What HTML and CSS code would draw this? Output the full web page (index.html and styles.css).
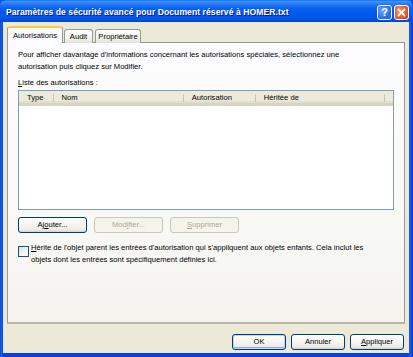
FILE: index.html
```html
<!DOCTYPE html>
<html lang="fr">
<head>
<meta charset="utf-8">
<link rel="stylesheet" href="styles.css">
</head>
<body>
<div class="window">
  <div class="titlebar">
    <span class="title">Paramètres de sécurité avancé pour Document réservé à HOMER.txt</span>
    <div class="caption-buttons">
      <span class="cap-btn help">?</span>
      <span class="cap-btn close"><svg width="9" height="9" viewBox="0 0 9 9"><path d="M1.5 1.5 L7.5 7.5 M7.5 1.5 L1.5 7.5" stroke="#fff" stroke-width="1.8" stroke-linecap="round"/></svg></span>
    </div>
  </div>
  <div class="client">
    <div class="tabs">
      <span class="tab active">Autorisations</span>
      <span class="tab t-audit">Audit</span>
      <span class="tab t-prop">Propriétaire</span>
    </div>
    <div class="panel">
      <p class="intro">Pour afficher davantage d'informations concernant les autorisations spéciales, sélectionnez une autorisation puis cliquez sur Modifier.</p>
      <div class="label"><u>L</u>iste des autorisations :</div>
      <div class="listview">
        <div class="lv-header">
          <span class="col c-type">Type</span>
          <span class="col c-nom">Nom</span>
          <span class="col c-aut">Autorisation</span>
          <span class="col c-her">Héritée de</span>
          <span class="col c-rest"></span>
        </div>
      </div>
      <div class="actions">
        <button class="btn">Aj<u>o</u>uter...</button>
        <button class="btn disabled">Mod<u>i</u>fier...</button>
        <button class="btn disabled"><u>S</u>upprimer</button>
      </div>
      <div class="inherit">
        <span class="checkbox"></span>
        <span class="inherit-text"><u>H</u>érite de l'objet parent les entrées d'autorisation qui s'appliquent aux objets enfants. Cela inclut les objets dont les entrées sont spécifiquement définies ici.</span>
      </div>
    </div>
    <div class="footer">
      <button class="btn default">OK</button>
      <button class="btn">Annuler</button>
      <button class="btn"><u>A</u>ppliquer</button>
    </div>
  </div>
</div>
</body>
</html>
```

FILE: styles.css
```css
* { box-sizing: border-box; }
html, body { margin: 0; padding: 0; }
body {
  width: 413px;
  height: 357px;
  overflow: hidden;
  font-family: "Liberation Sans", Arial, sans-serif;
  font-size: 7.6px;
  color: #000;
}
.window {
  width: 413px;
  height: 357px;
  display: flex;
  flex-direction: column;
  background: linear-gradient(to right, #0831D9 0, #166AEE 1px, #0842D8 3px, #0842D8 408px, #1661E8 410px, #0831D9 413px);
}
.titlebar {
  height: 22px;
  flex: none;
  display: flex;
  align-items: center;
  justify-content: space-between;
  padding: 0 4px 0 6px;
  background: linear-gradient(to bottom, #0A5FE8 0, #3D95FF 1px, #2B83F8 3px, #0B61EE 8px, #0058EE 14px, #0055E5 19px, #0048CC 22px);
  border-radius: 6px 6px 0 0;
}
.title {
  color: #fff;
  font-weight: bold;
  font-size: 8.6px;
  letter-spacing: 0.05px;
  text-shadow: 1px 1px 0 #0A1883;
  margin-top: 1px;
}
.caption-buttons {
  display: flex;
  gap: 2px;
  margin-top: 2px;
}
.cap-btn {
  width: 15px;
  height: 15px;
  border: 1px solid #fff;
  border-radius: 3px;
  display: flex;
  align-items: center;
  justify-content: center;
  color: #fff;
}
.help {
  background: radial-gradient(circle at 35% 35%, #6FA4FF 0, #2E6FF1 60%, #2357D6 100%);
  font-weight: bold;
  font-size: 11px;
  font-family: "Liberation Sans", Arial, sans-serif;
}
.close {
  background: radial-gradient(circle at 35% 35%, #F0926C 0, #E05A33 60%, #C3401E 100%);
}
.client {
  flex: 1;
  margin: 0 4px 4px 3px;
  background: #ECE9D8;
  display: flex;
  flex-direction: column;
  padding: 5px 4px 3px 4px;
}
.tabs {
  display: flex;
  align-items: flex-end;
  height: 16px;
  position: relative;
  z-index: 1;
  margin-bottom: -1px;
}
.tab {
  height: 14px;
  padding: 0;
  border: 1px solid #919B9C;
  border-bottom: none;
  border-radius: 3px 3px 0 0;
  background: linear-gradient(to bottom, #FFFFFF, #F3F3EF 60%, #E3E2D9);
  display: flex;
  align-items: center;
  justify-content: center;
  margin-right: 2px;
  white-space: nowrap;
}
.tab.active {
  height: 17px;
  width: 56px;
  background: #FCFCFE;
  border-top: 2px solid #FFC83C;
  margin-right: 1px;
  padding-bottom: 1px;
}
.t-audit { width: 29px; }
.t-prop { width: 46px; }
.panel {
  height: 282px;
  width: 398px;
  border: 1px solid #919B9C;
  border-right-color: #9A9A92;
  border-bottom: 2px solid #B9B6A9;
  background: linear-gradient(to bottom, #FCFCFE 0, #F9F9F6 60%, #F4F3EE 100%);
  padding: 6px 10px 0 10px;
}
.intro {
  margin: 0;
  line-height: 12px;
  width: 345px;
}
.label {
  margin-top: 4px;
  line-height: 12px;
}
.listview {
  margin-top: 1px;
  width: 376px;
  height: 120px;
  border: 1px solid #7F9DB9;
  background: #fff;
}
.lv-header {
  height: 15px;
  display: flex;
  background: #EBEADB;
  border-bottom: 3px solid #D8D4C4;
  box-shadow: inset 0 -2px 0 #E2DECD;
}
.col {
  display: flex;
  align-items: center;
  padding-left: 8px;
  border-right: 1px solid #C7C5B2;
  height: 8px;
  margin-top: 3px;
  line-height: 8px;
}
.c-type { width: 35px; }
.c-nom { width: 132px; }
.c-aut { width: 73px; }
.c-her { width: 131px; }
.c-rest { flex: 1; border-right: none; }
.actions {
  display: flex;
  gap: 7px;
  margin-top: 7px;
}
.btn {
  font-family: inherit;
  font-size: 7.6px;
  color: #000;
  height: 16px;
  padding: 0;
  border: 1px solid #003C74;
  border-radius: 3px;
  background: linear-gradient(to bottom, #FFFFFF 0, #F6F5F1 50%, #ECEBE6 85%, #D6D0C5 100%);
  line-height: 12px;
}
.actions .btn { width: 69px; }
.btn.disabled {
  color: #ACA899;
  border-color: #C9C7BA;
  background: #F5F4EA;
}
.inherit {
  display: flex;
  margin-top: 9px;
  gap: 2px;
}
.checkbox {
  flex: none;
  width: 11px;
  height: 11px;
  margin-top: 4px;
  border: 1px solid #1C5180;
  background: linear-gradient(135deg, #DCDCD7 0, #F6F6F4 60%, #FFFFFF 100%);
}
.inherit-text {
  width: 350px;
  line-height: 12px;
}
.footer {
  display: flex;
  justify-content: flex-end;
  gap: 5px;
  margin-top: 10px;
  padding-right: 1px;
}
.footer .btn { width: 54px; }
.btn.default {
  box-shadow: inset 0 0 0 1px #C0D6F7, inset 0 -1px 0 1px #8FB1E8;
}
u { text-decoration: underline; }
```
